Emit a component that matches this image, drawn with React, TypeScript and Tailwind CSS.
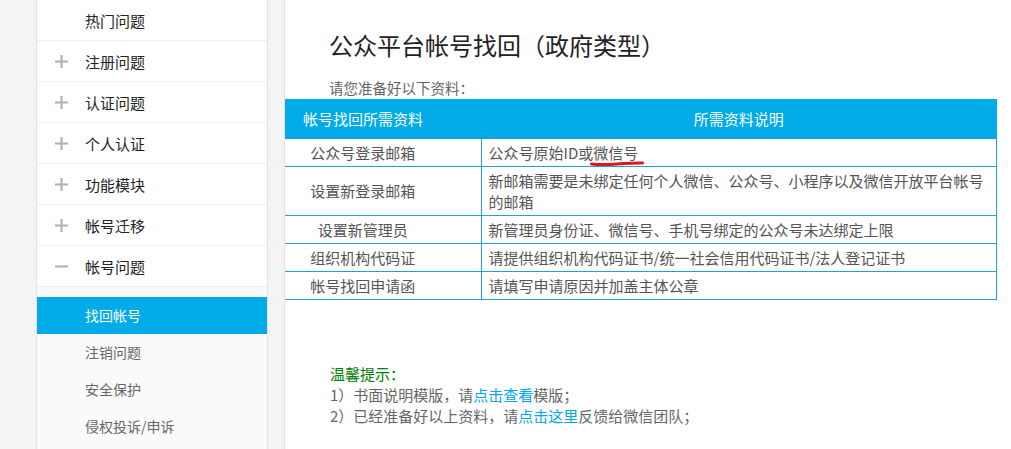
const menu = [
    { name: "热门问题", icon: null },
    { name: "注册问题", icon: "plus" },
    { name: "认证问题", icon: "plus" },
    { name: "个人认证", icon: "plus" },
    { name: "功能模块", icon: "plus" },
    { name: "帐号迁移", icon: "plus" },
    { name: "帐号问题", icon: "minus" },
];

const subMenu = ["找回帐号", "注销问题", "安全保护", "侵权投诉/申诉"];

const rows = [
    { need: "公众号登录邮箱", desc: "公众号原始ID或", mark: "微信号" },
    {
        need: "设置新登录邮箱",
        desc: "新邮箱需要是未绑定任何个人微信、公众号、小程序以及微信开放平台帐号的邮箱",
    },
    { need: "设置新管理员", desc: "新管理员身份证、微信号、手机号绑定的公众号未达绑定上限" },
    { need: "组织机构代码证", desc: "请提供组织机构代码证书/统一社会信用代码证书/法人登记证书" },
    { need: "帐号找回申请函", desc: "请填写申请原因并加盖主体公章" },
];

const Icon = ({ type }: { type: string | null }) => {
    if (!type) return <span className="w-[13px]" />;
    return (
        <svg width="13" height="13" viewBox="0 0 13 13" className="shrink-0">
            <rect x="0" y="5.5" width="13" height="2" fill="#a8b0b8" />
            {type === "plus" && <rect x="5.5" y="0" width="2" height="13" fill="#a8b0b8" />}
        </svg>
    );
};

const App = () => {
    return (
        <div
            className="flex h-[449px] w-[1011px] overflow-hidden bg-[#f4f4f4]"
            style={{ fontFamily: '"Microsoft YaHei", "Noto Sans CJK SC", "Noto Sans", sans-serif' }}
        >
            <div className="w-[36px] shrink-0" />

            {/* Sidebar */}
            <div className="flex w-[232px] shrink-0 flex-col border-x border-[#e2e2e2] bg-white">
                {menu.map((item) => (
                    <div
                        key={item.name}
                        className="flex h-[41px] shrink-0 items-center border-b border-[#f0f0f0] pl-[18px] text-[15px] text-[#222]"
                    >
                        <Icon type={item.icon} />
                        <span className="ml-[17px] leading-none">{item.name}</span>
                    </div>
                ))}
                <div className="flex-1 bg-[#fafafa] pt-[10px]">
                    {subMenu.map((name, i) => (
                        <div
                            key={name}
                            className={`flex h-[37px] items-center pl-[48px] text-[14px] ${
                                i === 0 ? "bg-[#00abe7] text-white" : "text-[#666]"
                            }`}
                        >
                            {name}
                        </div>
                    ))}
                </div>
            </div>

            <div className="w-[16px] shrink-0" />

            {/* Main */}
            <div className="flex-1 border-l border-[#e2e2e2] bg-white">
                <div className="pl-[44px] pt-[29px]">
                    <h1 className="text-[24px] leading-[32px] text-[#222]">公众平台帐号找回（政府类型）</h1>
                    <p className="mt-[17px] text-[14.5px] leading-[20px] text-[#666]">请您准备好以下资料：</p>
                </div>

                <table className="mt-[1px] w-[712px] border-collapse text-[15px] leading-[21px]">
                    <thead>
                        <tr className="bg-[#00abe7] text-white">
                            <th className="h-[39px] w-[196px] pr-[40px] text-center font-normal">帐号找回所需资料</th>
                            <th className="h-[39px] text-center font-normal">所需资料说明</th>
                        </tr>
                    </thead>
                    <tbody className="text-[#555]">
                        {rows.map((r) => (
                            <tr key={r.need}>
                                <td className="border border-l-0 border-[#1ea0da] py-[3px] pr-[40px] text-center">
                                    {r.need}
                                </td>
                                <td className="border border-[#1ea0da] py-[3px] pl-[7px] pr-[6px]">
                                    {r.desc}
                                    {r.mark && (
                                        <span className="relative">
                                            {r.mark}
                                            <svg
                                                width="54"
                                                height="7"
                                                viewBox="0 0 54 7"
                                                className="absolute -bottom-[4px] -left-[3px]"
                                            >
                                                <path
                                                    d="M1.5 4 C 12 5, 20 4.5, 27 4 C 36 3.5, 45 2.5, 52.5 3"
                                                    stroke="#e0141e"
                                                    strokeWidth="3"
                                                    fill="none"
                                                    strokeLinecap="round"
                                                />
                                            </svg>
                                        </span>
                                    )}
                                </td>
                            </tr>
                        ))}
                    </tbody>
                </table>

                <div className="pl-[45px] pt-[63px] text-[15px] leading-[21px] text-[#666]">
                    <p className="text-[#008000]">温馨提示：</p>
                    <p>
                        1）书面说明模版，请<span className="text-[#00a7ea]">点击查看</span>模版；
                    </p>
                    <p>
                        2）已经准备好以上资料，请<span className="text-[#00a7ea]">点击这里</span>反馈给微信团队；
                    </p>
                </div>
            </div>
        </div>
    );
};

export default App;
